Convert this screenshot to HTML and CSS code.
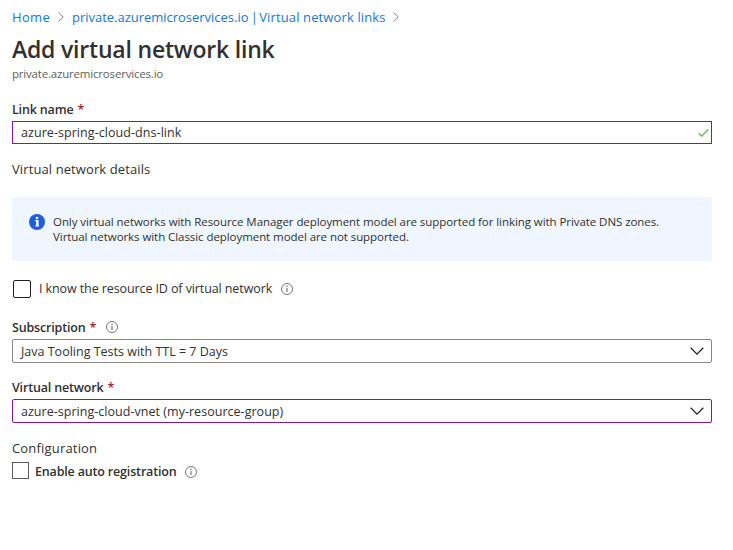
FILE: index.html
```html
<!DOCTYPE html>
<html lang="en">
<head>
<meta charset="utf-8">
<title>Add virtual network link</title>
<link rel="stylesheet" href="styles.css">
</head>
<body>
<svg class="defs" aria-hidden="true">
  <symbol id="info" viewBox="0 0 12 12"><circle cx="6" cy="6" r="5.5" fill="none" stroke="#6b6967" stroke-width=".9"/><path d="M6 5v4" stroke="#6b6967" stroke-width="1.1"/><circle cx="6" cy="3.3" r=".75" fill="#6b6967"/></symbol>
  <symbol id="crumb" viewBox="0 0 6 10"><path d="M.6.4 5.2 5 .6 9.6" fill="none" stroke="#777" stroke-width=".9"/></symbol>
  <symbol id="down" viewBox="0 0 14 8"><path d="M.7.8 7 7.1 13.3.8" fill="none" stroke="#201f1e" stroke-width="1.25"/></symbol>
</svg>
<main class="page">
  <nav class="crumbs">
    <a class="home">Home</a><svg class="sep"><use href="#crumb"/></svg><a class="path">private.azuremicroservices.io<span class="bar"> | </span><span class="leaf">Virtual network links</span></a><svg class="sep"><use href="#crumb"/></svg>
  </nav>
  <h1 class="title">Add virtual network link</h1>
  <p class="subtitle">private.azuremicroservices.io</p>

  <div class="label label-first"><span>Link name</span><span class="required">*</span></div>
  <div class="field field-edited field-text">
    <span class="value-name">azure-spring-cloud-dns-link</span>
    <svg class="valid" viewBox="0 0 11 8"><path d="M.6 4.2 3.7 7.1 10.3.6" fill="none" stroke="#74b658" stroke-width="1.4"/></svg>
  </div>

  <h2 class="section">Virtual network details</h2>
  <div class="note">
    <svg class="note-icon" viewBox="0 0 16 16"><circle cx="8" cy="8" r="8" fill="#1f5fd9"/><circle cx="8" cy="4" r="1.3" fill="#fff"/><path d="M6.3 6.6H9v5.1M6.2 12h3.9" fill="none" stroke="#fff" stroke-width="1.1"/><path d="M8.1 6.2V12" stroke="#fff" stroke-width="1.9"/></svg>
    <p class="note-text">Only virtual networks with Resource Manager deployment model are supported for linking with Private DNS zones.<br>Virtual networks with Classic deployment model are not supported.</p>
  </div>

  <div class="check check-id"><span class="box box-dark"></span><span class="check-text">I know the resource ID of virtual network</span><svg class="info"><use href="#info"/></svg></div>

  <div class="label label-sub"><span>Subscription</span><span class="required">*</span><svg class="info"><use href="#info"/></svg></div>
  <div class="field select"><span>Java Tooling Tests with TTL = 7 Days</span><svg class="arrow"><use href="#down"/></svg></div>

  <div class="label label-vnet"><span>Virtual network</span><span class="required">*</span></div>
  <div class="field select field-edited"><span class="value-vnet">azure-spring-cloud-vnet (my-resource-group)</span><svg class="arrow"><use href="#down"/></svg></div>

  <h2 class="section section-config">Configuration</h2>
  <div class="check check-auto"><span class="box"></span><span class="check-text">Enable auto registration</span><svg class="info"><use href="#info"/></svg></div>
</main>
</body>
</html>
```
FILE: styles.css
```css
* { box-sizing: border-box; }
body { margin: 0; background: #fff; color: #323130; font: 12.5px "Open Sans", "Noto Sans", sans-serif; }
h1, h2, p { margin: 0; font-weight: 400; }
svg { display: block; flex: none; }
.defs { width: 0; height: 0; position: absolute; }
.page { width: 712px; padding: 4px 0 0 12px; white-space: nowrap; }

.crumbs { display: flex; align-items: center; height: 26px; font-size: 13px; color: #1778d3; }
.home { width: 38px; letter-spacing: .35px; }
.path { width: 313px; letter-spacing: -.02px; }
.bar { letter-spacing: -1.05px; }
.leaf { letter-spacing: .13px; }
.sep { width: 6px; height: 10px; margin: 0 8px; }
.title { font-size: 23px; font-weight: 600; line-height: 38px; letter-spacing: -.2px; }
.subtitle { font-size: 11.5px; line-height: 12px; letter-spacing: -.19px; color: #605e5c; }

.label { display: flex; align-items: center; height: 24px; font-weight: 600; letter-spacing: -.17px; }
.label-first { margin-top: 17px; }
.label-sub { margin-top: 17px; }
.label-vnet { margin-top: 12px; }
.required { margin-left: 4px; color: #a4262c; }
.label .info { margin-left: 10px; }
.info { width: 12px; height: 12px; }

.field { display: flex; align-items: center; justify-content: space-between; height: 24px; padding: 0 7px 0 8px; border: 1px solid #8a8886; border-radius: 2px; }
.field-edited { border-color: #881798; }
.field-text { height: 23px; padding-right: 2px; border-radius: 0; }
.value-name { letter-spacing: .06px; }
.value-vnet { letter-spacing: .03px; }
.valid { width: 11px; height: 8px; }
.arrow { width: 14px; height: 8px; }

.section { margin-top: 15px; font-size: 13px; line-height: 20px; letter-spacing: .1px; }
.section-config { margin-top: 17px; line-height: 16px; letter-spacing: .18px; }

.note { display: flex; height: 64px; margin-top: 18px; padding: 17px; border-radius: 2px; background: #eff6ff; }
.note-icon { width: 16px; height: 16px; }
.note-text { margin-left: 8px; font-size: 11.5px; line-height: 15px; letter-spacing: -.065px; }

.check { display: flex; align-items: center; }
.box { width: 17px; height: 17px; border: 1px solid #605e5c; }
.box-dark { width: 18px; height: 18px; border-color: #201f1e; border-radius: 2px; }
.check-id { height: 18px; margin: 19px 0 0 1px; }
.check-id .check-text { width: 233px; margin: 0 9px 0 8px; letter-spacing: -.1px; line-height: 16px; }
.check-auto { height: 17px; margin-top: 6px; }
.check-auto .check-text { width: 141px; margin: 0 9px 0 6px; padding-top: 2px; font-weight: 600; letter-spacing: -.17px; }
.check-auto .info { margin-top: 2px; }
```
